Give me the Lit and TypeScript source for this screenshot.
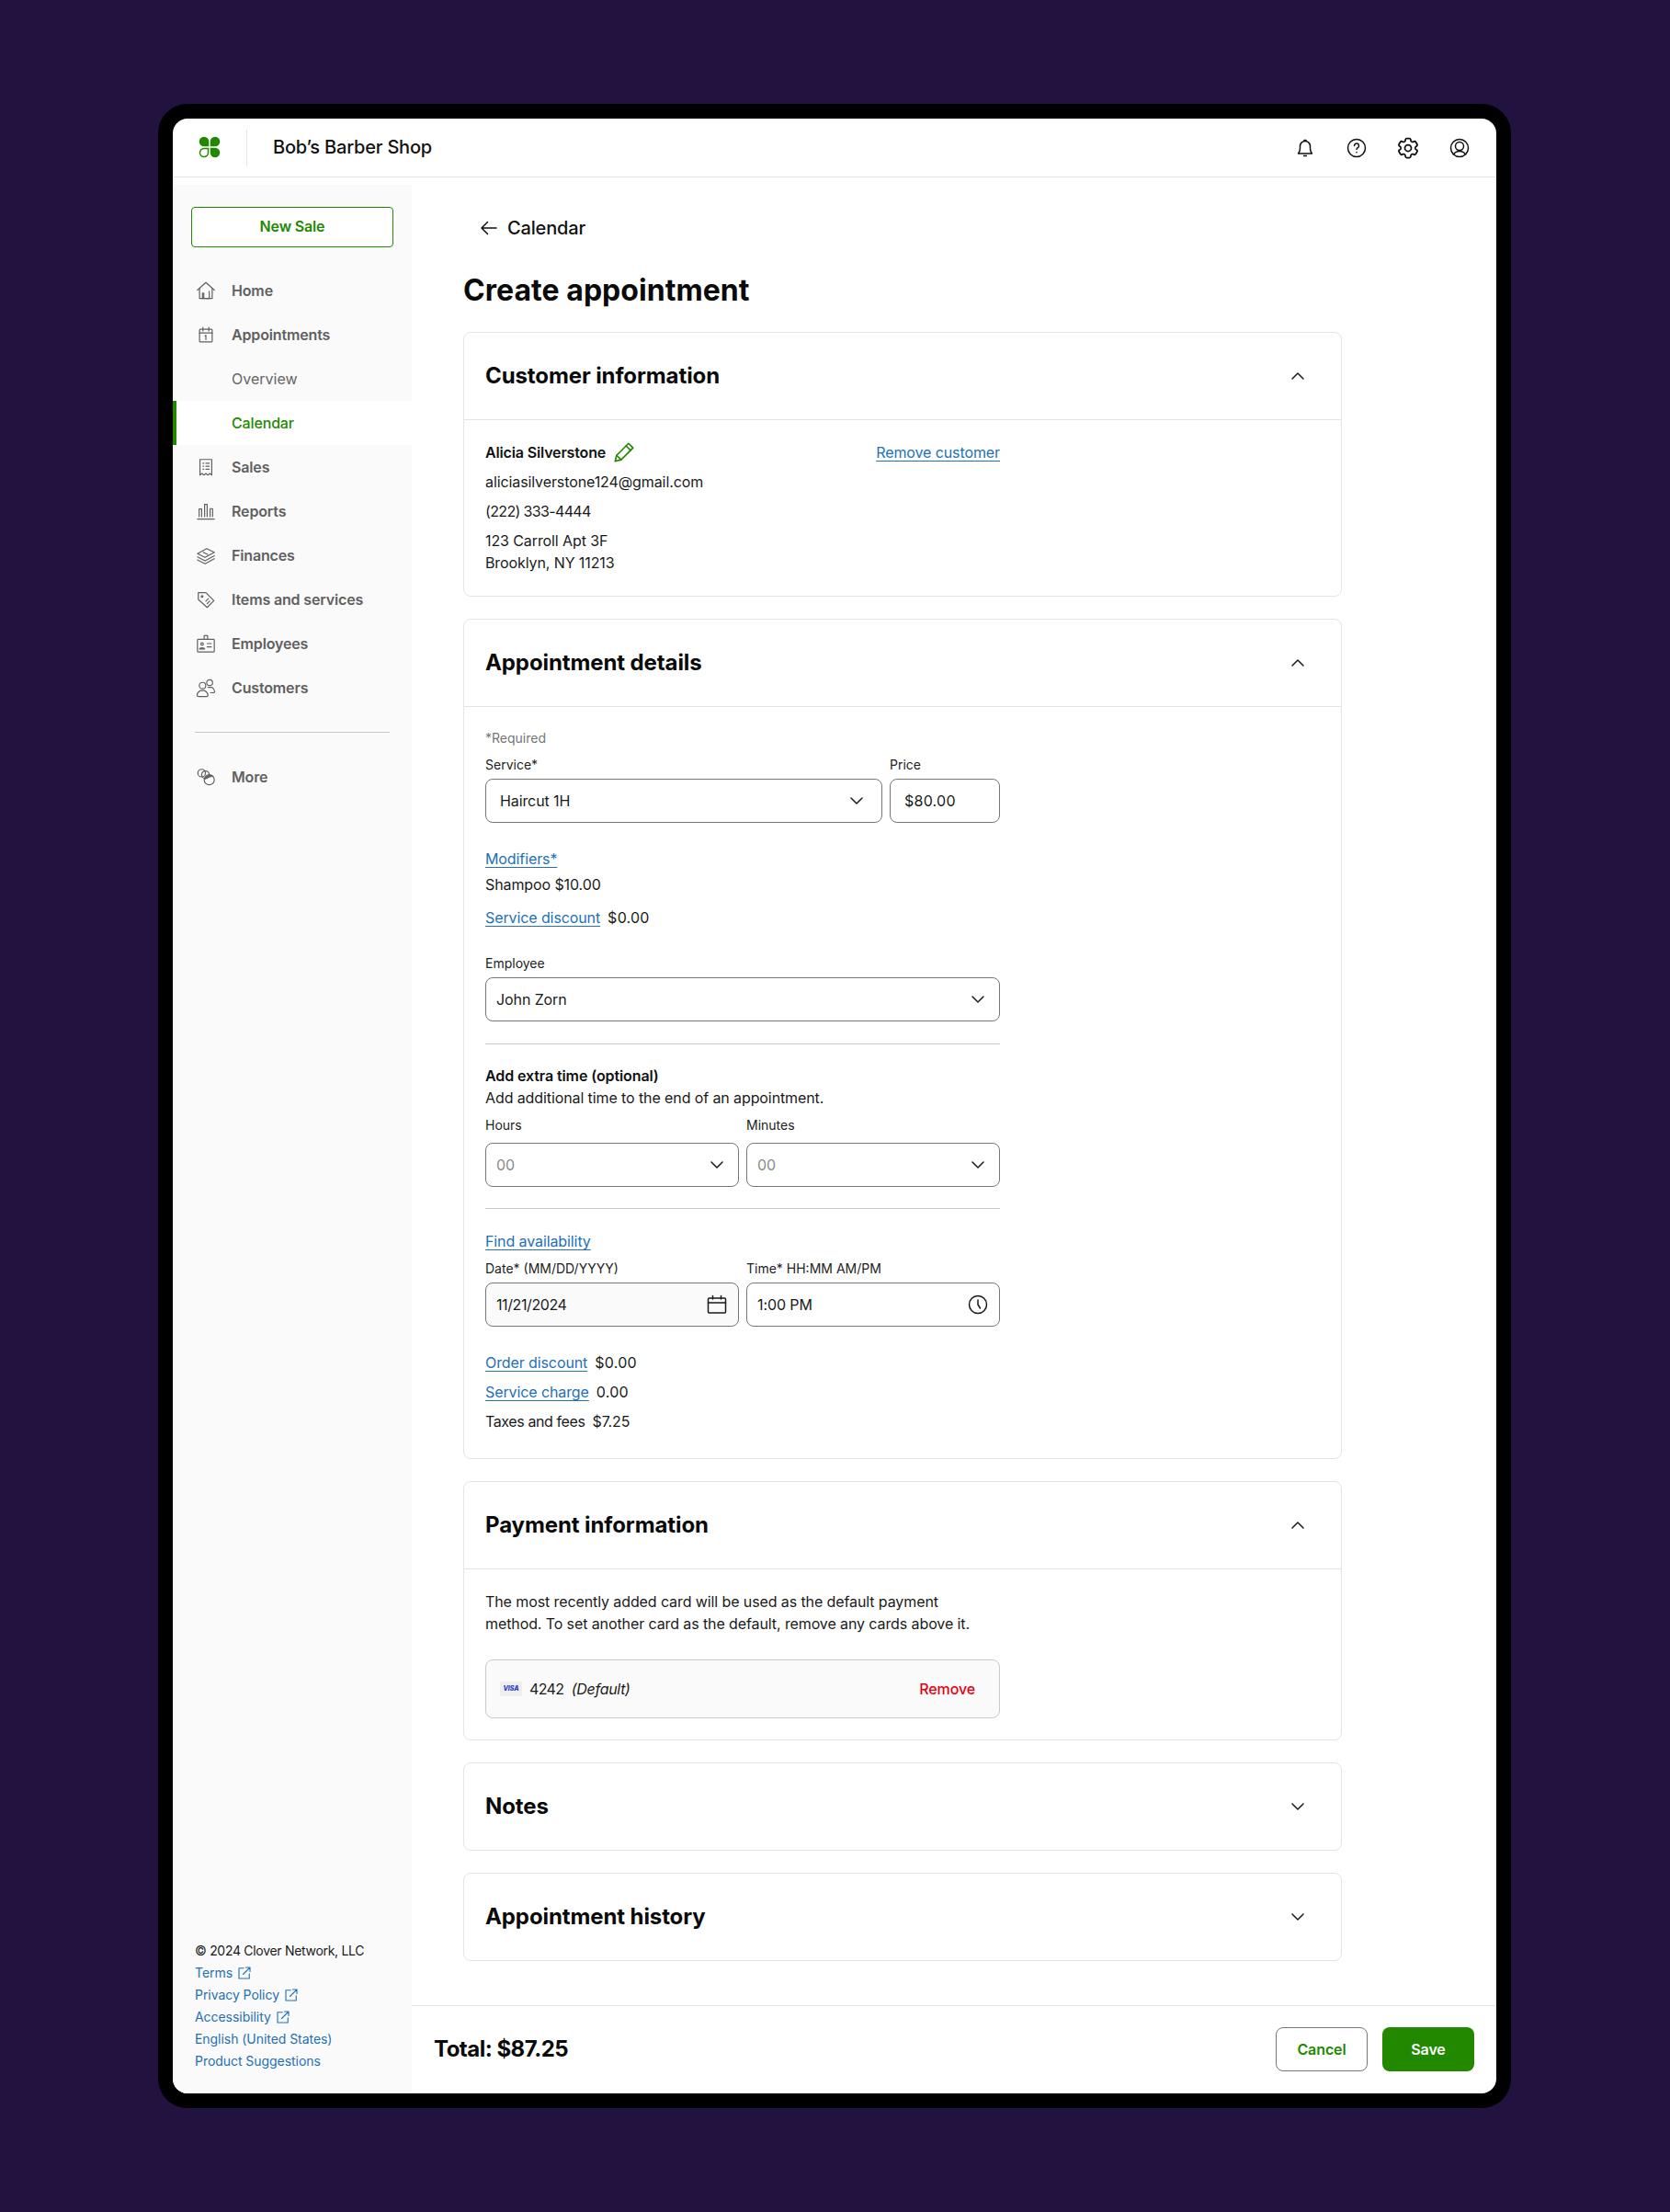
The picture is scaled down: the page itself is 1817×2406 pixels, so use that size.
import { LitElement, html, css, svg } from "lit";
import { customElement } from "lit/decorators.js";

const ic = (size: number, body: unknown, cls = "") =>
  html`<svg class="ic ${cls}" width=${size} height=${size} viewBox="0 0 24 24" fill="none" stroke="currentColor" stroke-width="1.5" stroke-linecap="round" stroke-linejoin="round">${body}</svg>`;

const chevDown = svg`<path d="M6 9l6 6 6-6"/>`;
const chevUp = svg`<path d="M6 15l6-6 6 6"/>`;
const ext = svg`<path d="M11 5H4v15h15v-7"/><path d="M10 14L20 4M14 4h6v6"/>`;

const navIcons: Record<string, unknown> = {
  Home: svg`<path d="M2 11.5L12 2.5l10 9"/><path d="M4.5 10v11.5h15V10"/><path d="M8 21.5V15h1.5v6.5M14.5 21.5h1.5V13"/><path d="M11 21.5h3"/>`,
  Appointments: svg`<rect x="4.5" y="5.5" width="15" height="15" rx="1"/><path d="M4.5 10h15M8.5 3.5v4M15.5 3.5v4M11 13.5l1-.8V18"/>`,
  Sales: svg`<path d="M5 3h14v18.5l-2.3-1.8-2.4 1.8-2.3-1.8-2.3 1.8-2.4-1.8L5 21.5z"/><path d="M8.5 7.5h1M8.5 11h1M8.5 14.5h1M12 7.5h4M12 11h4M12 14.5h4"/>`,
  Reports: svg`<path d="M2 21.5h20M4 18.5V9.5h3v9M10.5 18.5V4h3v14.500M17 18.5V9h3v9.500"/>`,
  Finances: svg`<path d="M2 10l11-6 9 4.500-11 6z"/><path d="M9 8.500l5 2.500"/><path d="M2 14l9 4.500L22 12.500"/><path d="M2 17.500l9 4.500 11-6"/>`,
  "Items and services": svg`<path d="M3 4h9l9.500 9.500-8 8L3 12z"/><circle cx="7.500" cy="8.500" r="1"/><path d="M12 14l3-3M13.500 17l3-3"/>`,
  Employees: svg`<rect x="2" y="7" width="20" height="15" rx="1"/><path d="M10 7V2.500h4V7"/><circle cx="7.500" cy="12.500" r="1.500"/><path d="M4.500 18.500c.5-2 5.500-2 6 0zM13.500 12h5M13.500 16h5"/>`,
  Customers: svg`<circle cx="8" cy="9.500" r="3.800"/><path d="M1.500 21c0-3 2.500-4.500 4-5.500h5c1.500 1 4 2.500 4 5.500 0 1-1 1.500-2 1.500h-9c-1 0-2-.5-2-1.500z"/><circle cx="16.500" cy="6" r="3.500"/><path d="M14.500 11.500h4.500c1.500 1 3.500 2.500 3.500 5 0 1-1 1.500-2 1.500h-3"/>`,
  More: svg`<circle cx="7" cy="7.500" r="4.500"/><circle cx="11.500" cy="9.500" r="4.500"/><circle cx="16" cy="15.500" r="6"/><path d="M11 14.500a6 6 0 0 1 9.500-3" fill="#666"/>`,
};

const navItems = [
  ["Home", "item"],
  ["Appointments", "item"],
  ["Overview", "sub"],
  ["Calendar", "active"],
  ["Sales", "item"],
  ["Reports", "item"],
  ["Finances", "item"],
  ["Items and services", "item"],
  ["Employees", "item"],
  ["Customers", "item"],
];

@customElement("app-root")
export class AppRoot extends LitElement {
  static styles = css`
    :host {
      display: block;
      box-sizing: border-box;
      height: 2406px;
      padding: 113px 173px 113px 172px;
      background: #22123f;
      font-family: Inter, "Liberation Sans", sans-serif;
      font-size: 16px;
      line-height: 24px;
      color: #1a1a1a;
      letter-spacing: -0.1px;
    }
    * { box-sizing: border-box; }
    .ic { display: block; flex: none; }
    .device {
      height: 2180px;
      border: 16px solid #000;
      border-radius: 32px;
      background: #000;
    }
    .screen {
      height: 100%;
      background: #fff;
      border-radius: 16px;
      overflow: hidden;
      display: flex;
      flex-direction: column;
    }
    header {
      height: 64px;
      flex: none;
      border-bottom: 1px solid #e4e4e4;
      display: flex;
      align-items: center;
      padding: 0 28px 0 28px;
    }
    .logo { width: 24px; height: 24px; margin-top: -1px; }
    .vline { width: 1px; height: 40px; background: #e4e4e4; margin: 0 28px 0 28px; }
    .shop { font-size: 20px; font-weight: 500; color: #111; flex: 1; letter-spacing: -0.2px; margin-top: -2px; }
    .tools { display: flex; gap: 32px; color: #111; }
    .gear { margin: -2px; }
    .body { flex: 1; display: flex; min-height: 0; }
    aside {
      width: 260px;
      flex: none;
      margin-top: 8px;
      background: #fafafa;
      display: flex;
      flex-direction: column;
      padding-top: 24px;
    }
    .new {
      margin: 0 20px 23px;
      height: 44px;
      border: 1px solid #228800;
      border-radius: 4px;
      background: #fff;
      color: #228800;
      font-weight: 600;
      display: flex;
      align-items: center;
      justify-content: center;
      padding-bottom: 2px;
      letter-spacing: -0.15px;
    }
    .nav {
      height: 48px;
      flex: none;
      display: flex;
      align-items: center;
      padding-left: 24px;
      gap: 16px;
      color: #606060;
      font-weight: 600;
      letter-spacing: -0.15px;
    }
    .nav .slot { width: 24px; flex: none; display: flex; justify-content: center; }
    .nav svg { width: 22px; height: 22px; stroke-width: 1.3; }
    .nav.sub { font-weight: 400; color: #666; letter-spacing: 0; }
    .nav.active {
      background: #fff;
      color: #228800;
      font-weight: 500;
      box-shadow: inset 4px 0 0 #228800;
    }
    .rule { height: 1px; background: #c8c8c8; margin: 24px 24px 24px; flex: none; }
    .legal {
      margin-top: auto;
      padding: 0 24px 23px;
      font-size: 14px;
      line-height: 24px;
      letter-spacing: -0.05px;
    }
    .legal .copy { letter-spacing: -0.3px; }
    .legal a {
      display: flex;
      align-items: center;
      gap: 4px;
      height: 24px;
      color: #2370b4;
      text-decoration: none;
    }
    .content { flex: 1; display: flex; flex-direction: column; min-width: 0; }
    .scroll { flex: 1; min-height: 0; padding: 43px 168px 0 56px; overflow: hidden; }
    .back { display: flex; align-items: center; gap: 8px; padding-left: 16px; font-size: 20px; font-weight: 500; color: #111; letter-spacing: -0.15px; }
    h1 { margin: 36px 0 25px; font-size: 32px; line-height: 40px; font-weight: 700; color: #0a0a0a; letter-spacing: 0.05px; }
    .card {
      border: 1px solid #e4e4e4;
      border-radius: 8px;
      margin-bottom: 24px;
    }
    .card-head {
      height: 94px;
      display: flex;
      align-items: center;
      justify-content: space-between;
      padding: 0 35px 0 23px;
    }
    .card-head h2 { margin: 0 0 1px; font-size: 24px; line-height: 32px; font-weight: 700; color: #0a0a0a; letter-spacing: -0.1px; }
    .open .card-head { border-bottom: 1px solid #e4e4e4; height: 95px; }
    .card-body { padding: 0 23px; }
    .w { width: 560px; }
    .between { display: flex; justify-content: space-between; }
    .name { display: flex; align-items: center; gap: 7px; height: 24px; font-weight: 600; color: #111; letter-spacing: -0.15px; }
    .green { color: #228800; }
    a.l { color: #2370b4; text-decoration: underline; text-underline-offset: 3px; text-decoration-thickness: 1px; }
    .row { display: flex; gap: 8px; }
    .cols { display: grid; grid-template-columns: 1fr 1fr; gap: 8px; }
    .svc { display: grid; grid-template-columns: 1fr 120px; gap: 8px; }
    .lab { font-size: 14px; line-height: 20px; height: 20px; color: #222; letter-spacing: 0; }
    .muted { color: #767676; }
    .box {
      height: 48px;
      border: 1px solid #767676;
      border-radius: 8px;
      display: flex;
      align-items: center;
      justify-content: space-between;
      padding: 0 11px;
      margin-top: 5px;
    }
    .box.pad { padding-left: 15px; padding-right: 15px; }
    .box.fill { background: #fafafa; }
    .box .ghost { color: #8a8a8a; }
    .hr { height: 1px; background: #c8c8c8; }
    .strong { font-weight: 600; color: #111; }
    .amt { letter-spacing: 0.25px; }
    .tight { letter-spacing: -0.4px; }
    .num { letter-spacing: -0.65px; }
    .def { letter-spacing: -0.3px; }
    .m4 { margin-top: 4px; }
    .m8 { margin-top: 8px; }
    .m12 { margin-top: 12px; }
    .m22 { margin-top: 22px; }
    .m23 { margin-top: 23px; }
    .m24 { margin-top: 24px; }
    .m27 { margin-top: 27px; }
    .m28 { margin-top: 28px; }
    .pay {
      margin-top: 27px;
      height: 64px;
      border: 1px solid #c8c8c8;
      border-radius: 8px;
      background: #fafafa;
      display: flex;
      align-items: center;
      padding: 0 26px 0 15px;
    }
    .visa {
      width: 24px;
      height: 16px;
      border-radius: 2px;
      background: #eee;
      color: #2a3fd0;
      font-size: 7px;
      line-height: 16px;
      font-weight: 800;
      font-style: italic;
      text-align: center;
      margin-right: 8px;
      letter-spacing: 0;
    }
    .remove { margin-left: auto; color: #e60012; font-weight: 500; }
    .foot {
      height: 96px;
      flex: none;
      border-top: 1px solid #e4e4e4;
      display: flex;
      align-items: center;
      padding: 0 24px 1px;
      gap: 16px;
    }
    .total { font-size: 24px; font-weight: 700; color: #0a0a0a; margin-right: auto; letter-spacing: -0.5px; }
    .btn {
      width: 100px;
      height: 48px;
      border-radius: 8px;
      display: flex;
      align-items: center;
      justify-content: center;
      font-weight: 600;
    }
    .btn.cancel { border: 1px solid #767676; color: #228800; }
    .btn.save { background: #228800; color: #fff; }
  `;

  private nav() {
    return navItems.map(
      ([t, k]) => html`<div class="nav ${k}"><span class="slot">${navIcons[t] ? ic(24, navIcons[t]) : ""}</span><span>${t}</span></div>`
    );
  }

  private cardHead(title: string, open: boolean) {
    return html`<div class="card-head"><h2>${title}</h2>${ic(24, open ? chevUp : chevDown)}</div>`;
  }

  private select(v: string, ghost = false, cls = "") {
    return html`<div class="box ${cls}"><span class=${ghost ? "ghost" : ""}>${v}</span>${ic(24, chevDown)}</div>`;
  }

  render() {
    return html`
      <div class="device">
        <div class="screen">
          <header>
            <svg class="logo" viewBox="0 0 24 24" fill="#228800">
              <path d="M11.300 11.300H6A5.300 5.300 0 1 1 11.300 6z"/>
              <path d="M12.700 11.300H18A5.300 5.300 0 1 0 12.700 6z"/>
              <path d="M12.700 12.700H18A5.300 5.300 0 1 1 12.700 18z"/>
              <path d="M10.500 13.500H6A4.500 4.500 0 1 0 10.500 18z" fill="none" stroke="#228800" stroke-width="1.500"/>
            </svg>
            <div class="vline"></div>
            <div class="shop">Bob’s Barber Shop</div>
            <div class="tools">
              ${ic(24, svg`<path d="M4.500 18h15c-1.500-1.500-2-3-2-5.500V10a5.500 5.500 0 0 0-11 0v2.500c0 2.500-.5 4-2 5.500z"/><path d="M11 4.500V3.500h2v1M10.500 20.500h3"/>`)}
              ${ic(24, svg`<circle cx="12" cy="12" r="9.500"/><path d="M9.500 9.500a2.500 2.500 0 1 1 3.800 2.100c-.8.5-1.300 1-1.300 2"/><path d="M12 16.500v.2"/>`)}
              ${ic(28, svg`<path d="M9.594 3.940c.09-.542.56-.94 1.110-.94h2.593c.55 0 1.020.398 1.110.94l.213 1.281c.063.374.313.686.645.870.074.04.147.083.22.127.325.196.72.257 1.075.124l1.217-.456a1.125 1.125 0 0 1 1.370.49l1.296 2.247a1.125 1.125 0 0 1-.26 1.431l-1.003.827c-.293.241-.438.613-.43.992a7.723 7.723 0 0 1 0 .255c-.008.378.137.75.43.991l1.004.827c.424.35.534.955.26 1.43l-1.298 2.247a1.125 1.125 0 0 1-1.369.491l-1.217-.456c-.355-.133-.75-.072-1.076.124a6.470 6.470 0 0 1-.22.128c-.331.183-.581.495-.644.869l-.213 1.281c-.09.543-.56.94-1.110.94h-2.594c-.55 0-1.019-.398-1.110-.94l-.213-1.281c-.062-.374-.312-.686-.644-.87a6.520 6.520 0 0 1-.22-.127c-.325-.196-.72-.257-1.076-.124l-1.217.456a1.125 1.125 0 0 1-1.369-.49l-1.297-2.247a1.125 1.125 0 0 1 .26-1.431l1.004-.827c.292-.24.437-.613.43-.991a6.932 6.932 0 0 1 0-.255c.007-.38-.138-.751-.43-.992l-1.004-.827a1.125 1.125 0 0 1-.26-1.430l1.297-2.247a1.125 1.125 0 0 1 1.370-.491l1.216.456c.356.133.751.072 1.076-.124.072-.044.146-.086.22-.128.332-.183.582-.495.644-.869l.214-1.280z"/><circle cx="12" cy="12" r="3"/>`, "gear")}
              ${ic(24, svg`<circle cx="12" cy="12" r="9.500"/><circle cx="12" cy="10" r="4.500"/><path d="M5.500 19c1.500-2.500 3.500-3.500 6.500-3.500s5 1 6.500 3.500"/>`)}
            </div>
          </header>
          <div class="body">
            <aside>
              <div class="new">New Sale</div>
              ${this.nav()}
              <div class="rule"></div>
              <div class="nav item"><span class="slot">${ic(24, navIcons.More)}</span><span>More</span></div>
              <div class="legal">
                <div class="copy">© 2024 Clover Network, LLC</div>
                <a>Terms ${ic(18, ext)}</a>
                <a>Privacy Policy ${ic(18, ext)}</a>
                <a>Accessibility ${ic(18, ext)}</a>
                <a>English (United States)</a>
                <a>Product Suggestions</a>
              </div>
            </aside>
            <div class="content">
              <div class="scroll">
                <div class="back">${ic(24, svg`<path d="M20 12H4.500M10.500 5.500L4 12l6.500 6.500"/>`)}<span>Calendar</span></div>
                <h1>Create appointment</h1>

                <section class="card open">
                  ${this.cardHead("Customer information", true)}
                  <div class="card-body" style="padding-top:23px;padding-bottom:24px">
                    <div class="w between">
                      <span class="name">Alicia Silverstone
                        <span class="green">${ic(26, svg`<path d="M3 21l1.500-6L16.500 3l4.500 4.500L9 19.500z"/><path d="M14 5.500l4.500 4.500M4.500 15L9 19.500"/>`)}</span>
                      </span>
                      <a class="l">Remove customer</a>
                    </div>
                    <div class="m8">aliciasilverstone124@gmail.com</div>
                    <div class="m8 num">(222) 333-4444</div>
                    <div class="m8">123 Carroll Apt 3F</div>
                    <div>Brooklyn, NY 11213</div>
                  </div>
                </section>

                <section class="card open">
                  ${this.cardHead("Appointment details", true)}
                  <div class="card-body" style="padding-top:24px;padding-bottom:28px">
                    <div class="w">
                      <div class="lab muted">*Required</div>
                      <div class="svc" style="margin-top:9px">
                        <div><div class="lab">Service*</div>${this.select("Haircut 1H", false, "pad")}</div>
                        <div><div class="lab">Price</div><div class="box pad amt">$80.00</div></div>
                      </div>
                      <div class="m27"><a class="l">Modifiers*</a></div>
                      <div class="m4">Shampoo $10.00</div>
                      <div class="m12 row"><a class="l">Service discount</a><span class="amt">$0.00</span></div>
                      <div class="lab m28">Employee</div>
                      ${this.select("John Zorn")}
                      <div class="hr m24"></div>
                      <div class="m22 strong">Add extra time (optional)</div>
                      <div>Add additional time to the end of an appointment.</div>
                      <div class="cols m8">
                        <div><div class="lab">Hours</div><div style="height:4px"></div>${this.select("00", true)}</div>
                        <div><div class="lab">Minutes</div><div style="height:4px"></div>${this.select("00", true)}</div>
                      </div>
                      <div class="hr m23"></div>
                      <div class="m23"><a class="l">Find availability</a></div>
                      <div class="cols m8">
                        <div>
                          <div class="lab">Date* (MM/DD/YYYY)</div>
                          <div class="box fill"><span class="tight">11/21/2024</span>${ic(24, svg`<rect x="2.500" y="5" width="19" height="16" rx="1"/><path d="M2.500 10h19M7.500 2.500V6M16.500 2.500V6"/>`)}</div>
                        </div>
                        <div>
                          <div class="lab">Time* HH:MM AM/PM</div>
                          <div class="box"><span>1:00 PM</span>${ic(24, svg`<circle cx="12" cy="12" r="9.500"/><path d="M12 7v5l2.500 4"/>`)}</div>
                        </div>
                      </div>
                      <div class="m27 row"><a class="l">Order discount</a><span class="amt">$0.00</span></div>
                      <div class="m8 row"><a class="l">Service charge</a><span class="amt">0.00</span></div>
                      <div class="m8 row"><span class="tight">Taxes and fees</span><span>$7.25</span></div>
                    </div>
                  </div>
                </section>

                <section class="card open">
                  ${this.cardHead("Payment information", true)}
                  <div class="card-body" style="padding-top:23px;padding-bottom:23px">
                    <div class="w">
                      <div>The most recently added card will be used as the default payment<br />method. To set another card as the default, remove any cards above it.</div>
                      <div class="pay">
                        <span class="visa">VISA</span>
                        <span class="def"><span class="num">4242</span>&nbsp;&nbsp;<i>(Default)</i></span>
                        <span class="remove">Remove</span>
                      </div>
                    </div>
                  </div>
                </section>

                <section class="card">${this.cardHead("Notes", false)}</section>
                <section class="card">${this.cardHead("Appointment history", false)}</section>
              </div>
              <div class="foot">
                <div class="total">Total: $87.25</div>
                <div class="btn cancel">Cancel</div>
                <div class="btn save">Save</div>
              </div>
            </div>
          </div>
        </div>
      </div>
    `;
  }
}
